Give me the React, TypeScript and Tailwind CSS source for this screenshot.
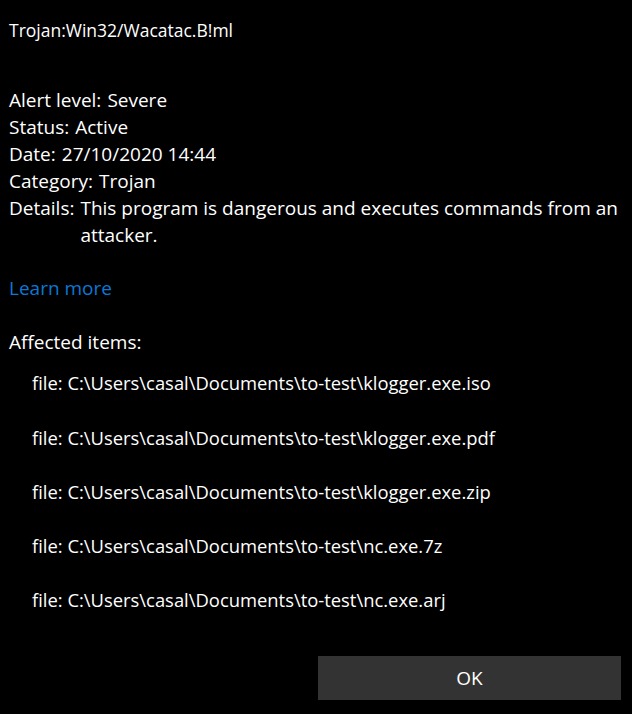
import React from "react";

const rows: [string, string][] = [
  ["Alert level:", "Severe"],
  ["Status:", "Active"],
  ["Date:", "27/10/2020 14:44"],
  ["Category:", "Trojan"],
  ["Details:", "This program is dangerous and executes commands from an attacker."],
];

const files = [
  "file: C:\\Users\\casal\\Documents\\to-test\\klogger.exe.iso",
  "file: C:\\Users\\casal\\Documents\\to-test\\klogger.exe.pdf",
  "file: C:\\Users\\casal\\Documents\\to-test\\klogger.exe.zip",
  "file: C:\\Users\\casal\\Documents\\to-test\\nc.exe.7z",
  "file: C:\\Users\\casal\\Documents\\to-test\\nc.exe.arj",
];

export default function App() {
  return (
    <div
      className="w-[632px] h-[714px] bg-black text-white flex flex-col overflow-hidden"
      style={{ fontFamily: '"Segoe UI", "Open Sans", sans-serif' }}
    >
      <div className="pl-[9px] pt-[17px] text-[17.5px] leading-[27px]">Trojan:Win32/Wacatac.B!ml</div>
      <div className="pl-[9px] pr-[5px] mt-[43px] flex flex-col text-[19px] leading-[27px]">
        {rows.map(([k, v]) => (
          <div key={k} className="flex gap-[6px]">
            <span className="shrink-0">{k}</span>
            <span>{v}</span>
          </div>
        ))}
      </div>
      <div className="pl-[9px] mt-[26px] text-[19px] leading-[27px] text-[#0a78d4]">Learn more</div>
      <div className="pl-[9px] mt-[27px] text-[19px] leading-[27px]">Affected items:</div>
      <div className="flex flex-col pl-[32px] text-[18.4px]">
        {files.map((f) => (
          <div key={f} className="h-[54.25px] flex items-center">
            {f}
          </div>
        ))}
      </div>
      <div className="flex-1" />
      <div className="flex justify-end pr-[11px] pb-[14px]">
        <button className="w-[303px] h-[44px] bg-[#333333] text-white text-[19px]">OK</button>
      </div>
    </div>
  );
}
